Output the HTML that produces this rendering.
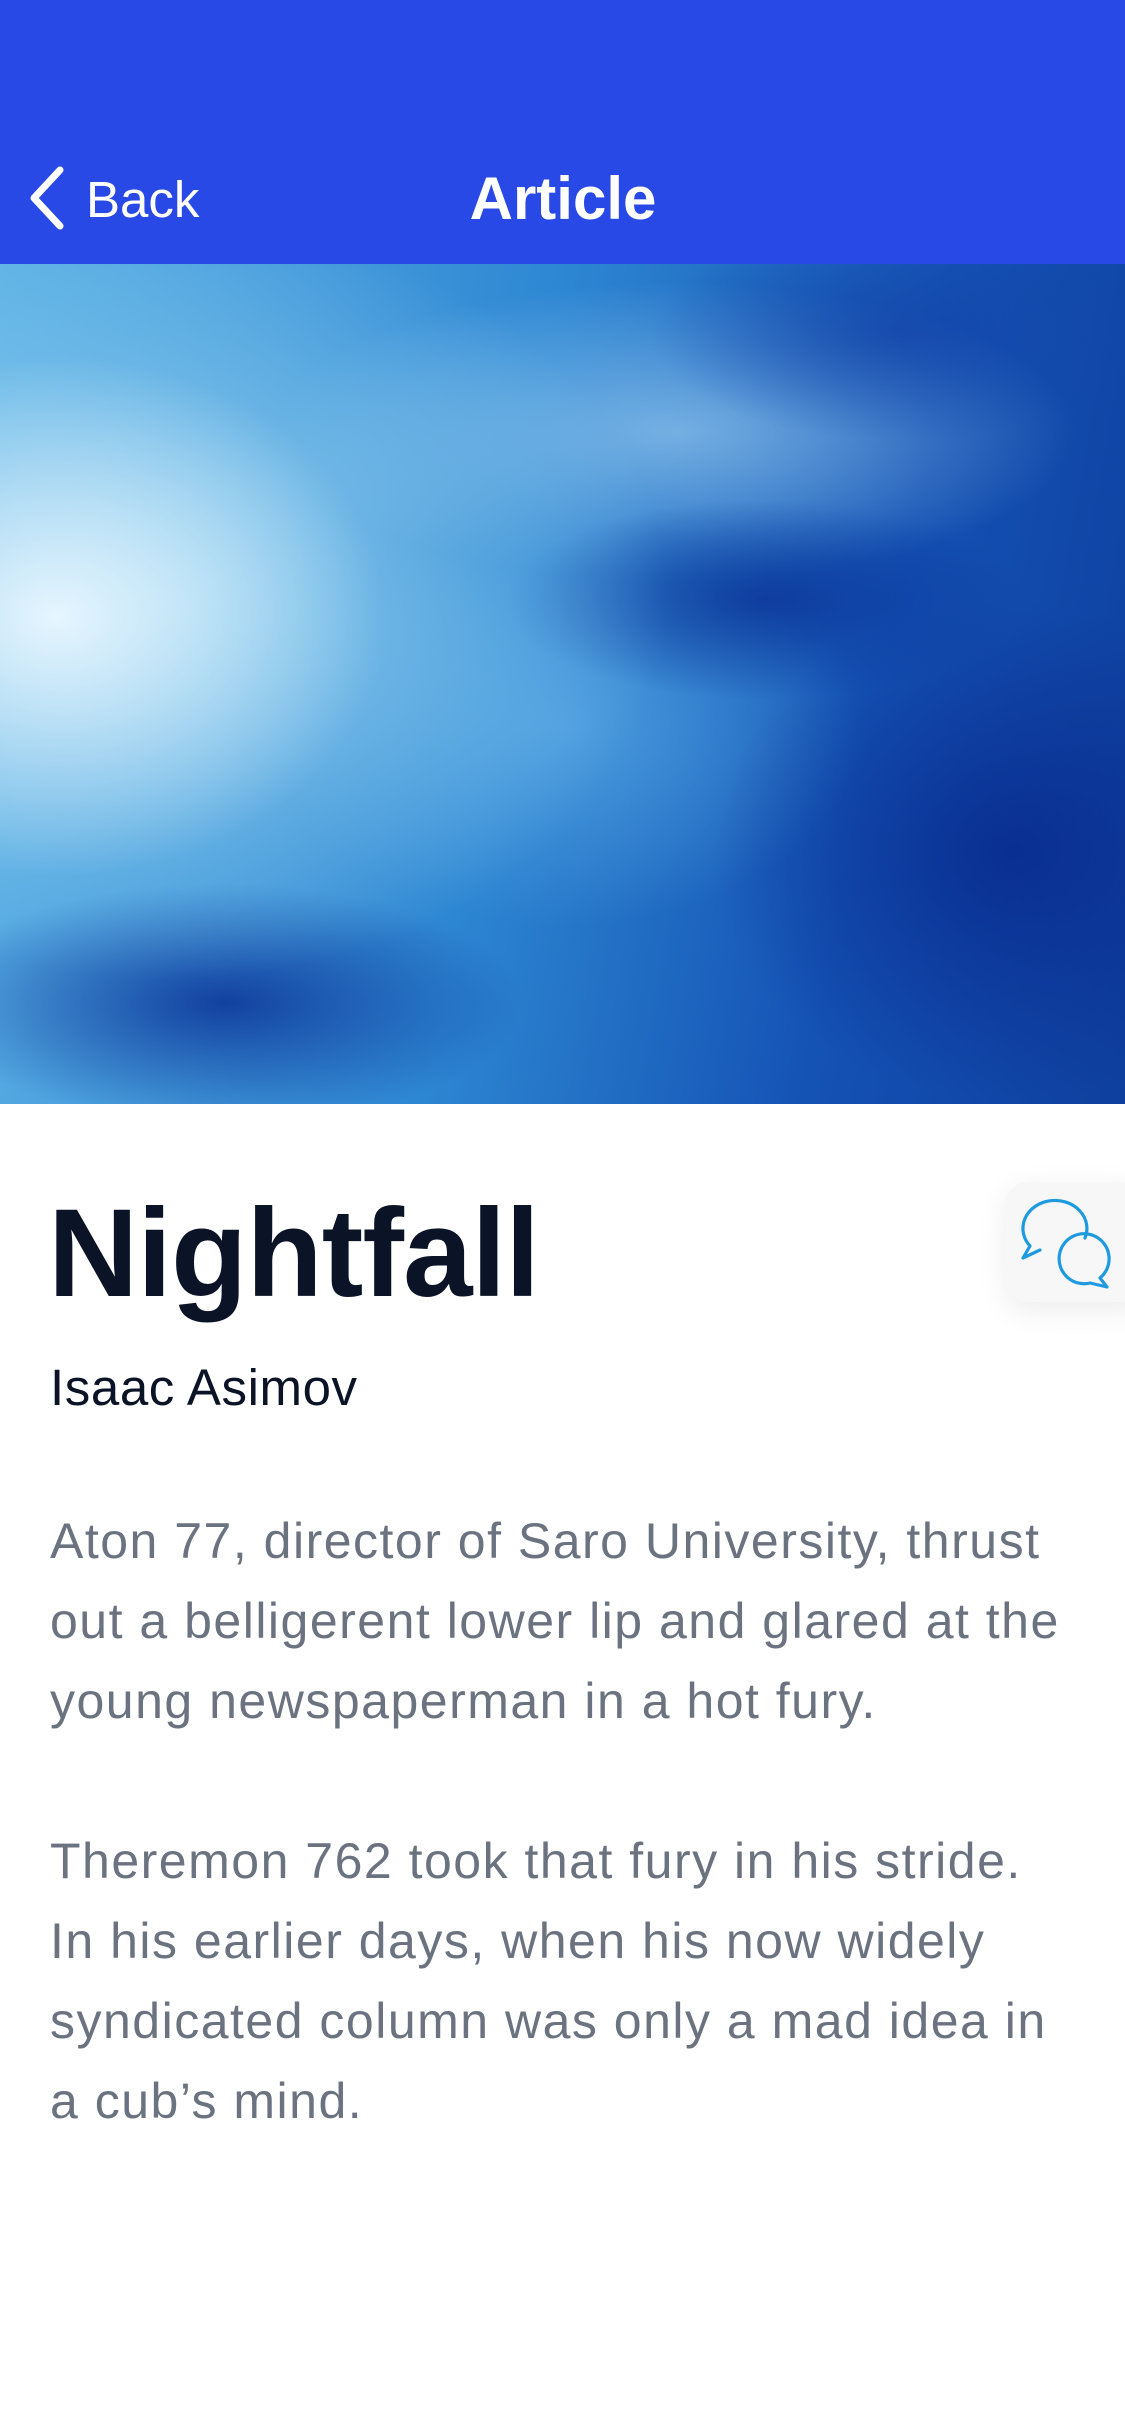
<!DOCTYPE html>
<html><head><meta charset="utf-8"><style>
*{margin:0;padding:0;box-sizing:border-box}
html,body{width:1125px;height:2436px;background:#fff;overflow:hidden;font-family:"Liberation Sans",sans-serif;position:relative}
.hdr{position:absolute;left:0;top:0;width:1125px;height:264px;background:#2849E5}
.back{position:absolute;left:86px;top:174px;font-size:51px;line-height:51px;color:#fff}
.ttl{position:absolute;left:0;width:1125px;top:169px;text-align:center;font-size:60px;line-height:60px;font-weight:bold;color:#fff;padding-left:1px}
.img{position:absolute;left:0;top:264px;width:1125px;height:840px;
background:
radial-gradient(ellipse 330px 260px at 5% 42%,rgba(235,248,255,.95),rgba(200,235,250,0) 100%),
radial-gradient(ellipse 500px 380px at 15% 40%,rgba(150,210,240,.9),rgba(120,190,235,0) 100%),
radial-gradient(ellipse 300px 120px at 20% 88%,rgba(10,50,150,.85),rgba(10,50,150,0) 100%),
radial-gradient(ellipse 260px 100px at 68% 40%,rgba(10,50,150,.8),rgba(10,50,150,0) 100%),
radial-gradient(ellipse 300px 250px at 90% 70%,rgba(8,40,140,.8),rgba(8,40,140,0) 100%),
radial-gradient(ellipse 250px 110px at 80% 8%,rgba(20,70,170,.8),rgba(20,70,170,0) 100%),
radial-gradient(ellipse 300px 200px at 50% 55%,rgba(90,170,230,.7),rgba(60,150,220,0) 100%),
radial-gradient(ellipse 400px 150px at 60% 20%,rgba(170,215,245,.6),rgba(170,215,245,0) 100%),
linear-gradient(100deg,#5fb3e6 0%,#2d86d2 45%,#1452b4 75%,#0e3f9e 100%)}
.h1{position:absolute;left:48px;top:1191px;font-size:125px;line-height:125px;font-weight:bold;color:#0B1426;letter-spacing:-1px}
.au{position:absolute;left:50px;top:1362px;font-size:51px;line-height:51px;color:#0B1426;letter-spacing:0.6px}
.p{position:absolute;left:50px;font-size:50px;line-height:80px;color:#6B7280;white-space:nowrap;letter-spacing:1.5px}
.chat{position:absolute;left:1006px;top:1182px;width:140px;height:120px;border-radius:22px;background:#f7f7f8;box-shadow:0 8px 30px rgba(0,0,0,.08)}
</style></head><body>
<div class="hdr">
<svg style="position:absolute;left:0;top:0" width="80" height="264"><path d="M60 170 L34 198 L60 226" fill="none" stroke="#fff" stroke-width="7" stroke-linecap="round" stroke-linejoin="round"/></svg>
<div class="back">Back</div>
<div class="ttl">Article</div>
</div>
<div class="img"></div>
<div class="h1">Nightfall</div>
<div class="au">Isaac Asimov</div>
<div class="chat"></div>
<svg style="position:absolute;left:0;top:0" width="1125" height="1320" viewBox="0 0 1125 1320">
<g fill="none" stroke="#1E9BE0" stroke-width="3.2" stroke-linejoin="round" stroke-linecap="round">
<path d="M1030 1246 A32 28 0 1 1 1085 1238 M1030 1246 L1023 1258 L1040 1250"/>
<path d="M1100 1278 A25 25 0 1 0 1090 1283 L1107 1287 Z" />
</g>
</svg>
<div class="p" style="top:1501px">Aton 77, director of Saro University, thrust<br>out a belligerent lower lip and glared at the<br>young newspaperman in a hot fury.</div>
<div class="p" style="top:1821px">Theremon 762 took that fury in his stride.<br>In his earlier days, when his now widely<br>syndicated column was only a mad idea in<br>a cub’s mind.</div>
</body></html>
